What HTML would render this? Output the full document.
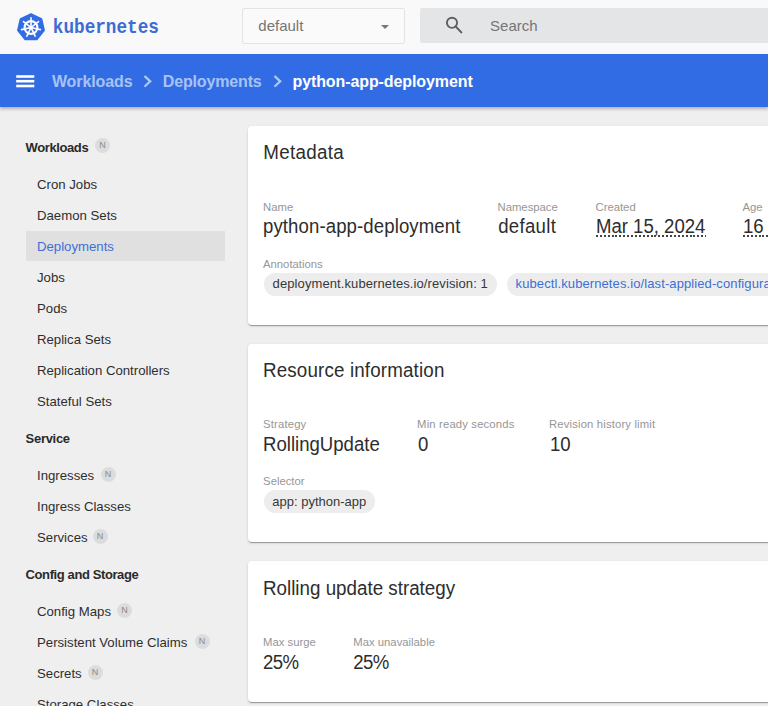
<!DOCTYPE html>
<html><head><meta charset="utf-8"><style>
html,body{margin:0;padding:0;width:768px;height:706px;overflow:hidden;background:#efefef;}
body{position:relative;font-family:"Liberation Sans", sans-serif;}
.t{position:absolute;white-space:nowrap;line-height:1;}
.r{position:absolute;}
</style></head><body>
<div class="r" style="left:0px;top:0px;width:768px;height:54px;background:#f9f9f9;"></div>
<svg class="r" style="left:17px;top:12.5px" width="28" height="28" viewBox="0 0 28 28">
<polygon points="14.00,0.80 24.63,5.92 27.26,17.43 19.90,26.65 8.10,26.65 0.74,17.43 3.37,5.92" fill="#326ce5" stroke="#326ce5" stroke-width="1.4" stroke-linejoin="round"/>
<g stroke="#fff" fill="none">
<circle cx="14" cy="14.5" r="6.4" stroke-width="2.1"/>
<g stroke-width="1.6" stroke-linecap="round"><line x1="14.00" y1="13.50" x2="14.00" y2="4.90"/><line x1="14.78" y1="13.88" x2="21.51" y2="8.51"/><line x1="14.97" y1="14.72" x2="23.36" y2="16.64"/><line x1="14.43" y1="15.40" x2="18.17" y2="23.15"/><line x1="13.57" y1="15.40" x2="9.83" y2="23.15"/><line x1="13.03" y1="14.72" x2="4.64" y2="16.64"/><line x1="13.22" y1="13.88" x2="6.49" y2="8.51"/></g></g>
<circle cx="14" cy="14.5" r="1.7" fill="#fff"/>
</svg>
<div class="t" style="left:52.8px;top:19.53px;font-size:17.7px;color:#3b6dd4;font-weight:700;font-family:'Liberation Mono', monospace;transform:scale(1,1.1);transform-origin:0 13.57px;">kubernetes</div>
<div class="r" style="left:242px;top:8px;width:163px;height:36px;background:#fafafa;border:1px solid #e4e4e4;box-sizing:border-box;border-radius:2px;"></div>
<div class="t" style="left:258.3px;top:18.40px;font-size:15px;color:#757575;">default</div>
<div class="r" style="left:381px;top:25px;width:0;height:0;border-left:4.5px solid transparent;border-right:4.5px solid transparent;border-top:4.5px solid #777;"></div>
<div class="r" style="left:420px;top:8px;width:348px;height:35px;background:#e4e5e6;border-radius:2px 0 0 2px;"></div>
<svg class="r" style="left:444px;top:16px" width="20" height="20" viewBox="0 0 20 20">
<circle cx="8" cy="6.8" r="5.1" stroke="#5f5f5f" stroke-width="1.9" fill="none"/>
<line x1="11.6" y1="10.4" x2="17.3" y2="16.4" stroke="#5f5f5f" stroke-width="2.1" stroke-linecap="round"/>
</svg>
<div class="t" style="left:490.1px;top:17.70px;font-size:15px;color:#757575;">Search</div>
<div class="r" style="left:0px;top:54px;width:768px;height:53px;background:#326ce5;box-shadow:0 2px 3px rgba(0,0,0,.25);z-index:2;"></div>
<svg class="r" style="left:14px;top:72px;z-index:3" width="24" height="18" viewBox="0 0 24 18"><g fill="#fff"><rect x="2.2" y="3.2" width="18.1" height="2.6"/><rect x="2.2" y="7.9" width="18.1" height="2.6"/><rect x="2.2" y="12.7" width="18.1" height="2.6"/></g></svg>
<div class="t" style="left:51.9px;top:73.96px;font-size:16px;color:#a7c3f3;font-weight:700;letter-spacing:-0.1px;z-index:3;">Workloads</div>
<svg class="r" style="left:142px;top:74px;z-index:3" width="12" height="14" viewBox="0 0 12 14"><path d="M3.2 2.6 L8.2 7.3 L3.2 12" stroke="#a9c8f6" stroke-width="2.3" fill="none" stroke-linecap="round"/></svg>
<div class="t" style="left:162.8px;top:73.96px;font-size:16px;color:#a7c3f3;font-weight:700;letter-spacing:-0.15px;z-index:3;">Deployments</div>
<svg class="r" style="left:272px;top:74px;z-index:3" width="12" height="14" viewBox="0 0 12 14"><path d="M3.2 2.6 L8.2 7.3 L3.2 12" stroke="#a9c8f6" stroke-width="2.3" fill="none" stroke-linecap="round"/></svg>
<div class="t" style="left:292.5px;top:73.96px;font-size:16px;color:#fff;font-weight:700;letter-spacing:-0.1px;z-index:3;">python-app-deployment</div>
<div class="t" style="left:25.6px;top:140.60px;font-size:13px;color:#2a2a2a;font-weight:700;letter-spacing:-0.4px;">Workloads</div>
<div class="r" style="left:95.0px;top:138.3px;width:15px;height:15px;border-radius:50%;background:#dcdcdc;font-size:9px;line-height:15px;text-align:center;color:#8a8a8a;">N</div>
<div class="r" style="left:26px;top:231px;width:199px;height:30px;background:#e0e0e0;"></div>
<div class="t" style="left:37.0px;top:177.73px;font-size:13.2px;color:#2e2e2e;">Cron Jobs</div>
<div class="t" style="left:37.0px;top:208.73px;font-size:13.2px;color:#2e2e2e;">Daemon Sets</div>
<div class="t" style="left:37.0px;top:239.73px;font-size:13.2px;color:#3d6fd8;">Deployments</div>
<div class="t" style="left:37.0px;top:270.73px;font-size:13.2px;color:#2e2e2e;">Jobs</div>
<div class="t" style="left:37.0px;top:301.73px;font-size:13.2px;color:#2e2e2e;">Pods</div>
<div class="t" style="left:37.0px;top:332.73px;font-size:13.2px;color:#2e2e2e;">Replica Sets</div>
<div class="t" style="left:37.0px;top:363.73px;font-size:13.2px;color:#2e2e2e;">Replication Controllers</div>
<div class="t" style="left:37.0px;top:394.73px;font-size:13.2px;color:#2e2e2e;">Stateful Sets</div>
<div class="t" style="left:25.6px;top:431.50px;font-size:13px;color:#2a2a2a;font-weight:700;letter-spacing:-0.3px;">Service</div>
<div class="t" style="left:37.0px;top:468.63px;font-size:13.2px;color:#2e2e2e;">Ingresses</div>
<div class="t" style="left:37.0px;top:499.63px;font-size:13.2px;color:#2e2e2e;">Ingress Classes</div>
<div class="t" style="left:37.0px;top:530.63px;font-size:13.2px;color:#2e2e2e;">Services</div>
<div class="r" style="left:100.5px;top:466.8px;width:15px;height:15px;border-radius:50%;background:#dcdcdc;font-size:9px;line-height:15px;text-align:center;color:#8a8a8a;">N</div>
<div class="r" style="left:92.5px;top:528.8px;width:15px;height:15px;border-radius:50%;background:#dcdcdc;font-size:9px;line-height:15px;text-align:center;color:#8a8a8a;">N</div>
<div class="t" style="left:25.6px;top:567.50px;font-size:13px;color:#2a2a2a;font-weight:700;letter-spacing:-0.4px;">Config and Storage</div>
<div class="t" style="left:37.0px;top:604.63px;font-size:13.2px;color:#2e2e2e;">Config Maps</div>
<div class="t" style="left:37.0px;top:635.63px;font-size:13.2px;color:#2e2e2e;">Persistent Volume Claims</div>
<div class="t" style="left:37.0px;top:666.63px;font-size:13.2px;color:#2e2e2e;">Secrets</div>
<div class="t" style="left:37.0px;top:697.63px;font-size:13.2px;color:#2e2e2e;">Storage Classes</div>
<div class="r" style="left:117.0px;top:602.8px;width:15px;height:15px;border-radius:50%;background:#dcdcdc;font-size:9px;line-height:15px;text-align:center;color:#8a8a8a;">N</div>
<div class="r" style="left:194.5px;top:633.8px;width:15px;height:15px;border-radius:50%;background:#dcdcdc;font-size:9px;line-height:15px;text-align:center;color:#8a8a8a;">N</div>
<div class="r" style="left:87.5px;top:664.8px;width:15px;height:15px;border-radius:50%;background:#dcdcdc;font-size:9px;line-height:15px;text-align:center;color:#8a8a8a;">N</div>
<div class="r" style="left:248px;top:126px;width:552px;height:199px;background:#fff;border-radius:4px;box-shadow:0 2px 1px -1px rgba(0,0,0,.2),0 1px 1px 0 rgba(0,0,0,.14),0 1px 3px 0 rgba(0,0,0,.12);"></div>
<div class="r" style="left:248px;top:344px;width:552px;height:198px;background:#fff;border-radius:4px;box-shadow:0 2px 1px -1px rgba(0,0,0,.2),0 1px 1px 0 rgba(0,0,0,.14),0 1px 3px 0 rgba(0,0,0,.12);"></div>
<div class="r" style="left:248px;top:561px;width:552px;height:141px;background:#fff;border-radius:4px;box-shadow:0 2px 1px -1px rgba(0,0,0,.2),0 1px 1px 0 rgba(0,0,0,.14),0 1px 3px 0 rgba(0,0,0,.12);"></div>
<div class="t" style="left:263.3px;top:144.19px;font-size:18.8px;color:#2d2d2d;letter-spacing:0.3px;transform:scale(1,1.06);transform-origin:0 15.91px;">Metadata</div>
<div class="t" style="left:263.1px;top:201.63px;font-size:11.3px;color:#969696;">Name</div>
<div class="t" style="left:497.5px;top:201.63px;font-size:11.3px;color:#969696;">Namespace</div>
<div class="t" style="left:595.5px;top:201.63px;font-size:11.3px;color:#969696;">Created</div>
<div class="t" style="left:742.5px;top:201.63px;font-size:11.3px;color:#969696;">Age</div>
<div class="t" style="left:263.0px;top:217.76px;font-size:18.6px;color:#2d2d2d;letter-spacing:0.1px;transform:scale(1,1.06);transform-origin:0 15.74px;">python-app-deployment</div>
<div class="t" style="left:498.2px;top:217.76px;font-size:18.6px;color:#2d2d2d;letter-spacing:0.3px;transform:scale(1,1.06);transform-origin:0 15.74px;">default</div>
<div class="t" style="left:595.9px;top:217.76px;font-size:18.6px;color:#2d2d2d;transform:scale(1,1.06);transform-origin:0 15.74px;">Mar 15, 2024</div>
<div class="t" style="left:742.9px;top:217.76px;font-size:18.6px;color:#2d2d2d;transform:scale(1,1.06);transform-origin:0 15.74px;">16 days ago</div>
<div class="r" style="left:596px;top:235px;width:110px;height:2px;background-image:repeating-linear-gradient(90deg,#444 0 2px,transparent 2px 3.9px);"></div>
<div class="r" style="left:743px;top:235px;width:57px;height:2px;background-image:repeating-linear-gradient(90deg,#444 0 2px,transparent 2px 3.9px);"></div>
<div class="t" style="left:263.0px;top:259.03px;font-size:11.3px;color:#969696;">Annotations</div>
<div class="r" style="left:263.5px;top:273px;width:233.5px;height:23px;background:#ededed;border-radius:12px;"></div>
<div class="t" style="left:272.6px;top:277.00px;font-size:13px;color:#383838;letter-spacing:0.1px;">deployment.kubernetes.io/revision: 1</div>
<div class="r" style="left:507.4px;top:273px;width:392.6px;height:23px;background:#ededed;border-radius:12px;"></div>
<div class="t" style="left:515.6px;top:277.00px;font-size:13px;color:#3d6fd6;letter-spacing:0.1px;">kubectl.kubernetes.io/last-applied-configuration</div>
<div class="t" style="left:263.0px;top:361.89px;font-size:18.8px;color:#2d2d2d;letter-spacing:0.15px;transform:scale(1,1.06);transform-origin:0 15.91px;">Resource information</div>
<div class="t" style="left:263.1px;top:419.03px;font-size:11.3px;color:#969696;letter-spacing:0.15px;">Strategy</div>
<div class="t" style="left:263.0px;top:436.26px;font-size:18.6px;color:#2d2d2d;transform:scale(1,1.06);transform-origin:0 15.74px;">RollingUpdate</div>
<div class="t" style="left:417.1px;top:419.03px;font-size:11.3px;color:#969696;letter-spacing:0.15px;">Min ready seconds</div>
<div class="t" style="left:418.0px;top:436.26px;font-size:18.6px;color:#2d2d2d;transform:scale(1,1.06);transform-origin:0 15.74px;">0</div>
<div class="t" style="left:549.0px;top:419.03px;font-size:11.3px;color:#969696;letter-spacing:0.15px;">Revision history limit</div>
<div class="t" style="left:549.9px;top:436.26px;font-size:18.6px;color:#2d2d2d;transform:scale(1,1.06);transform-origin:0 15.74px;">10</div>
<div class="t" style="left:263.1px;top:476.03px;font-size:11.3px;color:#969696;">Selector</div>
<div class="r" style="left:263.7px;top:490px;width:111.60000000000002px;height:23.399999999999977px;background:#ededed;border-radius:12px;"></div>
<div class="t" style="left:272.3px;top:494.50px;font-size:13px;color:#383838;">app: python-app</div>
<div class="t" style="left:263.0px;top:580.29px;font-size:18.8px;color:#2d2d2d;transform:scale(1,1.06);transform-origin:0 15.91px;">Rolling update strategy</div>
<div class="t" style="left:263.1px;top:636.93px;font-size:11.3px;color:#969696;">Max surge</div>
<div class="t" style="left:263.0px;top:654.06px;font-size:18.6px;color:#2d2d2d;letter-spacing:-0.6px;transform:scale(1,1.06);transform-origin:0 15.74px;">25%</div>
<div class="t" style="left:353.3px;top:636.93px;font-size:11.3px;color:#969696;">Max unavailable</div>
<div class="t" style="left:353.2px;top:654.06px;font-size:18.6px;color:#2d2d2d;letter-spacing:-0.6px;transform:scale(1,1.06);transform-origin:0 15.74px;">25%</div>
</body></html>
